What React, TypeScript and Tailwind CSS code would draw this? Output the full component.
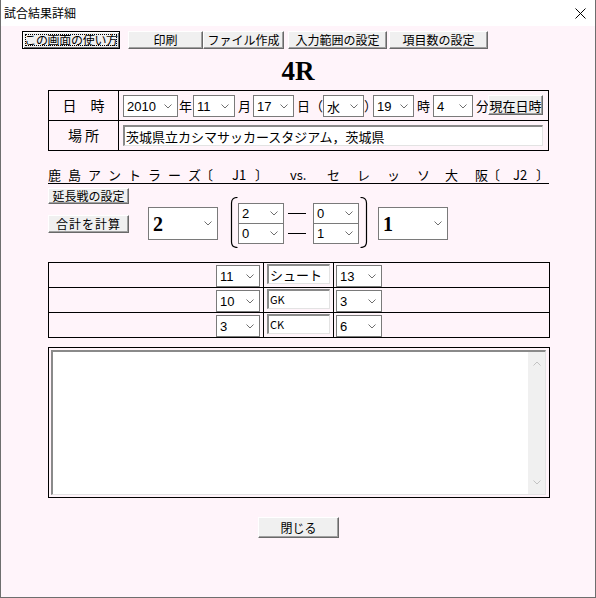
import React from "react";

const font = { fontFamily: '"Liberation Sans", "Noto Sans CJK JP", sans-serif' };
const jp = { fontFamily: '"Noto Sans CJK JP", "Liberation Sans", sans-serif' };

function Chevron({ color = "#6f6f6f" }: { color?: string }) {
  return (
    <svg width="8" height="5" viewBox="0 0 8 5" className="shrink-0">
      <polyline points="0.5,0.5 4,4 7.5,0.5" fill="none" stroke={color} strokeWidth="1" />
    </svg>
  );
}

function Btn({
  children,
  className = "",
  focused = false,
}: {
  children: React.ReactNode;
  className?: string;
  focused?: boolean;
}) {
  return (
    <div
      className={
        "flex shrink-0 items-center justify-center whitespace-nowrap bg-[#f0f0f0] text-[12px] leading-none text-black " +
        (focused
          ? "border border-black shadow-[inset_1px_1px_0_#fff,inset_-1px_-1px_0_#696969] "
          : "border border-t-white border-l-white border-r-[#696969] border-b-[#696969] shadow-[inset_-1px_-1px_0_#a0a0a0] ") +
        className
      }
      style={jp}
    >
      {focused ? (
        <span className="flex h-[calc(100%-4px)] w-[calc(100%-4px)] items-center justify-center border border-dotted border-black tracking-[-0.3px]">
          {children}
        </span>
      ) : (
        children
      )}
    </div>
  );
}

function Sel({
  value,
  className = "",
  big = false,
}: {
  value: string;
  className?: string;
  big?: boolean;
}) {
  return (
    <div
      className={
        "flex shrink-0 items-center justify-between border border-[#7a7a7a] bg-white pr-[5px] text-black " +
        (big ? "pl-[4px] " : "pl-[3px] text-[13px] leading-none ") +
        className
      }
      style={font}
    >
      {big ? (
        <span className="text-[20px] font-bold leading-none" style={{ fontFamily: '"Liberation Serif", serif' }}>
          {value}
        </span>
      ) : (
        <span style={value === "水" ? jp : font}>{value}</span>
      )}
      <Chevron />
    </div>
  );
}

function TextBox({ value, className = "", narrow = false }: { value: string; className?: string; narrow?: boolean }) {
  return (
    <div
      className={
        "flex shrink-0 items-center overflow-hidden border-t-2 border-l-2 border-b border-r border-t-[#8a8a8a] border-l-[#8a8a8a] border-b-[#e3e3e3] border-r-[#e3e3e3] bg-white pl-[1px] leading-none text-black " +
        (narrow ? "text-[11px] " : "text-[13px] ") +
        className
      }
      style={jp}
    >
      {value}
    </div>
  );
}

function Paren({ flip = false }: { flip?: boolean }) {
  return (
    <svg width="8" height="51" viewBox="0 0 8 51" className="shrink-0">
      <path
        d={flip ? "M0.5 0.5 Q6.5 0.5 6.5 6 L6.5 45 Q6.5 50.5 0.5 50.5" : "M7.5 0.5 Q1.5 0.5 1.5 6 L1.5 45 Q1.5 50.5 7.5 50.5"}
        fill="none"
        stroke="#000"
        strokeWidth="1.2"
      />
    </svg>
  );
}

const teamTokens: [string, number][] = [
  ["鹿", 20], ["島", 20], ["ア", 20], ["ン", 20], ["ト", 20], ["ラ", 20], ["ー", 20], ["ズ", 12],
  ["〔", 32], ["J1", 23], ["〕", 35], ["vs.", 37],
  ["セ", 30], ["レ", 30], ["ッ", 30], ["ソ", 28], ["大", 30], ["阪", 12], ["〔", 26], ["J2", 23], ["〕", 13],
];

const statRows = [
  { left: "11", label: "シュート", right: "13" },
  { left: "10", label: "GK", right: "3" },
  { left: "3", label: "CK", right: "6" },
];

export default function App() {
  return (
    <div className="flex h-[598px] w-[596px] flex-col border-x border-b border-[#6e6e6e] bg-white" style={font}>
      {/* title bar */}
      <div className="flex h-[26px] shrink-0 items-center justify-between bg-white pl-[3px] pr-[9px]">
        <span className="text-[12px] text-black" style={jp}>試合結果詳細</span>
        <svg width="11" height="11" viewBox="0 0 11 11">
          <path d="M0.5 0.5 L10.5 10.5 M10.5 0.5 L0.5 10.5" stroke="#000" strokeWidth="1" />
        </svg>
      </div>

      {/* body */}
      <div className="flex flex-1 flex-col bg-[#fff4fa] pt-[5px]">
        {/* toolbar */}
        <div className="flex h-[18px] items-stretch">
          <Btn focused className="ml-[21px] w-[98px]">この画面の使い方</Btn>
          <Btn className="ml-[8px] w-[75px]">印刷</Btn>
          <Btn className="w-[81px]">ファイル作成</Btn>
          <Btn className="ml-[4px] w-[99px]">入力範囲の設定</Btn>
          <Btn className="ml-[2px] w-[99px]">項目数の設定</Btn>
        </div>

        {/* round */}
        <div
          className="mt-[5px] h-[34px] text-center text-[27px] font-bold leading-[34px] text-black"
          style={{ fontFamily: '"Liberation Serif", serif' }}
        >
          4R
        </div>

        {/* date / place */}
        <div className="ml-[47px] mt-[2px] w-[501px] border border-black text-black">
          <div className="flex h-[30px] border-b border-black">
            <div className="flex w-[70px] shrink-0 items-center justify-center border-r border-black text-[14px]" style={jp}>
              日　時
            </div>
            <div className="flex items-start pl-[4px] pt-[4px] text-[13px] leading-[22px]" style={jp}>
              <Sel value="2010" className="h-[22px] w-[55px]" />
              <span className="w-[15px] shrink-0 pl-[1px]">年</span>
              <Sel value="11" className="h-[22px] w-[42px]" />
              <span className="w-[18px] shrink-0 pl-[3px]">月</span>
              <Sel value="17" className="h-[22px] w-[41px]" />
              <span className="w-[29px] shrink-0 whitespace-nowrap pl-[3px]">日（</span>
              <Sel value="水" className="h-[22px] w-[41px]" />
              <span className="w-[9px] shrink-0 whitespace-nowrap">）</span>
              <Sel value="19" className="h-[22px] w-[41px]" />
              <span className="w-[19px] shrink-0 pl-[3px]">時</span>
              <Sel value="4" className="h-[22px] w-[40px]" />
              <span className="w-[15px] shrink-0 pl-[3px]">分</span>
              <Btn className="h-[20px] w-[55px] text-[13px]">現在日時</Btn>
            </div>
          </div>
          <div className="flex h-[29px]">
            <div className="flex w-[70px] shrink-0 items-center justify-center border-r border-black text-[14px]" style={jp}>
              場 所
            </div>
            <div className="flex items-start pl-[4px] pt-[4px]">
              <TextBox value="茨城県立カシマサッカースタジアム，茨城県" className="h-[21px] w-[420px]" />
            </div>
          </div>
        </div>

        {/* teams */}
        <div className="ml-[47px] mt-[14px] flex h-[19px] w-[501px] items-end border-b border-black text-[13px] leading-[17px] text-black" style={jp}>
          {teamTokens.map(([t, w], i) => (
            <span key={i} className="shrink-0 whitespace-nowrap" style={{ width: w }}>
              {t}
            </span>
          ))}
        </div>

        {/* score */}
        <div className="flex h-[64px] items-start">
          <div className="ml-[47px] flex w-[81px] shrink-0 flex-col">
            <Btn className="mt-[4px] h-[16px] w-[81px]">延長戦の設定</Btn>
            <Btn className="mt-[11px] h-[18px] w-[81px] tracking-[1px]">合計を計算</Btn>
          </div>
          <Sel big value="2" className="ml-[19px] mt-[23px] h-[33px] w-[70px]" />
          <div className="ml-[12px] mt-[13px] flex h-[51px] items-start">
            <Paren />
            <div className="mt-[6px] flex flex-col">
              <Sel value="2" className="h-[21px] w-[46px]" />
              <Sel value="0" className="-mt-px h-[21px] w-[46px]" />
            </div>
            <div className="mt-[6px] flex w-[29px] flex-col">
              <div className="flex h-[20px] items-center pl-[4px]">
                <div className="h-px w-[18px] bg-black" />
              </div>
              <div className="flex h-[20px] items-center pl-[4px]">
                <div className="h-px w-[18px] bg-black" />
              </div>
            </div>
            <div className="mt-[6px] flex flex-col">
              <Sel value="0" className="h-[21px] w-[46px]" />
              <Sel value="1" className="-mt-px h-[21px] w-[46px]" />
            </div>
            <div className="ml-[1px]">
              <Paren flip />
            </div>
          </div>
          <Sel big value="1" className="ml-[10px] mt-[23px] h-[33px] w-[70px]" />
        </div>

        {/* stats */}
        <div className="ml-[47px] mt-[14px] w-[502px] border border-black">
          {statRows.map((r, i) => (
            <div key={i} className={"flex " + (i < 2 ? "h-[25px] border-b border-black" : "h-[24px]")}>
              <div className="flex w-[215px] shrink-0 items-start justify-end border-r border-black pr-[3px] pt-[2px]">
                <Sel value={r.left} className="h-[22px] w-[44px]" />
              </div>
              <div className="flex w-[70px] shrink-0 items-start border-r border-black pl-[3px] pt-[1px]">
                <TextBox value={r.label} narrow={i > 0} className="h-[20px] w-[63px]" />
              </div>
              <div className="flex items-start pl-[2px] pt-[2px]">
                <Sel value={r.right} className="h-[22px] w-[46px]" />
              </div>
            </div>
          ))}
        </div>

        {/* memo */}
        <div className="ml-[47px] mt-[9px] flex h-[151px] w-[502px] border border-black p-[2px] pr-[3px]">
          <div className="flex flex-1 border-t-2 border-l-2 border-b border-r border-t-[#8a8a8a] border-l-[#8a8a8a] border-b-[#e3e3e3] border-r-[#e3e3e3] bg-white">
            <div className="flex-1" />
            <div className="flex w-[17px] flex-col items-center justify-between bg-[#f0f0f0] py-[9px]">
              <svg width="8" height="5" viewBox="0 0 8 5">
                <polyline points="0.5,4.5 4,1 7.5,4.5" fill="none" stroke="#c2c2c2" strokeWidth="1" />
              </svg>
              <Chevron color="#c2c2c2" />
            </div>
          </div>
        </div>

        {/* close */}
        <Btn className="ml-[257px] mt-[19px] h-[21px] w-[81px]">閉じる</Btn>
      </div>
    </div>
  );
}
